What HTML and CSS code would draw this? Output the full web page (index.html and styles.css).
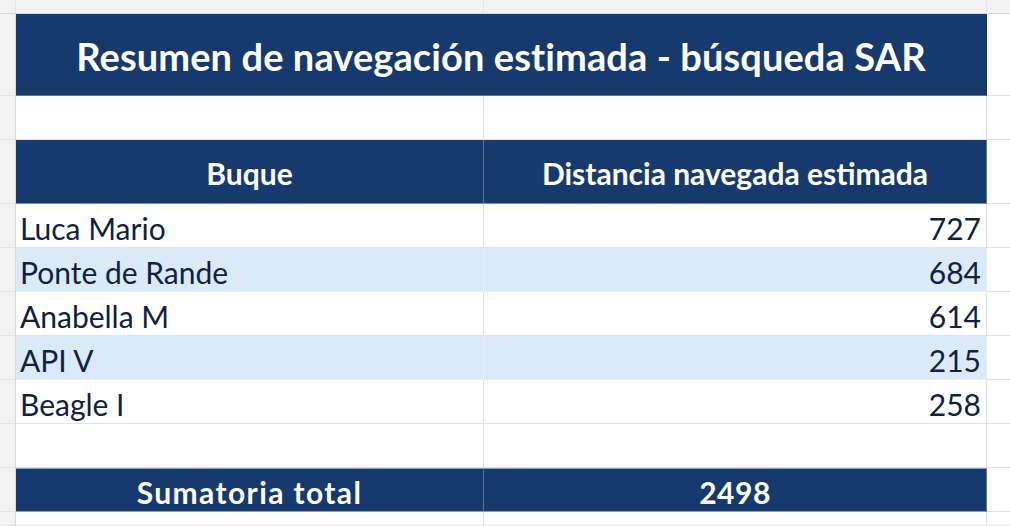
FILE: index.html
```html
<!DOCTYPE html>
<html lang="es">
<head>
<meta charset="utf-8">
<title>Resumen de navegación estimada</title>
<link rel="stylesheet" href="styles.css">
</head>
<body>
<div class="sheet">
  <div class="corner"></div><div class="colhead"></div><div class="colhead"></div><div class="colhead last"></div>

  <div class="rowhead"></div><div class="cell title span2">Resumen de navegación estimada - búsqueda SAR</div><div class="cell extra"></div>

  <div class="rowhead"></div><div class="cell"></div><div class="cell"></div><div class="cell extra"></div>

  <div class="rowhead"></div><div class="cell head">Buque</div><div class="cell head">Distancia navegada estimada</div><div class="cell extra"></div>

  <div class="rowhead"></div><div class="cell data">Luca Mario</div><div class="cell data num">727</div><div class="cell extra"></div>
  <div class="rowhead"></div><div class="cell data alt">Ponte de Rande</div><div class="cell data num alt">684</div><div class="cell extra"></div>
  <div class="rowhead"></div><div class="cell data">Anabella M</div><div class="cell data num">614</div><div class="cell extra"></div>
  <div class="rowhead"></div><div class="cell data alt">API V</div><div class="cell data num alt">215</div><div class="cell extra"></div>
  <div class="rowhead"></div><div class="cell data">Beagle I</div><div class="cell data num">258</div><div class="cell extra"></div>

  <div class="rowhead"></div><div class="cell"></div><div class="cell"></div><div class="cell extra"></div>

  <div class="rowhead"></div><div class="cell total total-label">Sumatoria total</div><div class="cell total total-value">2498</div><div class="cell extra"></div>

  <div class="rowhead"></div><div class="cell"></div><div class="cell"></div><div class="cell extra"></div>
</div>
</body>
</html>
```
FILE: styles.css
```css
html, body {
  margin: 0;
  padding: 0;
  background: #ffffff;
  overflow: hidden;
}

.sheet {
  display: grid;
  grid-template-columns: 16px 468px 503px 23px;
  grid-template-rows: 14px 82px 44px 64px 44px 44px 44px 44px 44px 44px 44px 14px;
  width: 1010px;
  height: 526px;
  font-family: Lato, "Open Sans", sans-serif;
  color: #0f2240;
}

.sheet > div {
  box-sizing: border-box;
}

.corner,
.colhead {
  background: #f3f3f3;
  border-bottom: 1px solid #dadada;
  border-right: 1px solid #e4e4e4;
}

.colhead.last {
  border-right: none;
}

.rowhead {
  background: #f3f3f3;
  border-right: 1px solid #dadada;
  border-bottom: 1px solid #e4e4e4;
}

.cell {
  background: #ffffff;
  border-right: 1px solid #e2e2e2;
  border-bottom: 1px solid #e2e2e2;
  display: flex;
  align-items: flex-end;
  padding: 0 5px 1px 4px;
  white-space: nowrap;
  overflow: hidden;
}

.cell.extra {
  border-right: none;
}

.span2 {
  grid-column: span 2;
}

.title {
  background: #173a6e;
  border-right-color: #173a6e;
  border-bottom-color: #5f7699;
  color: #ffffff;
  font-weight: 700;
  font-size: 38px;
  letter-spacing: 0.1px;
  justify-content: center;
  align-items: center;
  padding: 2px 0 0;
}

.head {
  background: #173a6e;
  border-right-color: #5f7699;
  border-bottom-color: #7b8fae;
  color: #ffffff;
  font-weight: 700;
  font-size: 30px;
  justify-content: center;
  align-items: center;
  padding: 2px 0 0;
}

.data {
  font-size: 30px;
  font-weight: 400;
}

.data.alt {
  background: #dbeaf9;
  border-right-color: #e6f0fb;
  border-bottom-color: #e6f0fb;
}

.num {
  justify-content: flex-end;
}

.total {
  background: #173a6e;
  border-right-color: #5f7699;
  border-bottom-color: #8a9cb8;
  color: #ffffff;
  font-weight: 700;
  font-size: 30px;
  justify-content: center;
  padding: 0 0 1px;
  box-shadow: inset 0 1px 0 #8a9cb8;
}

.total-label {
  letter-spacing: 1.4px;
}

.total-value {
  letter-spacing: 0.5px;
}
```
